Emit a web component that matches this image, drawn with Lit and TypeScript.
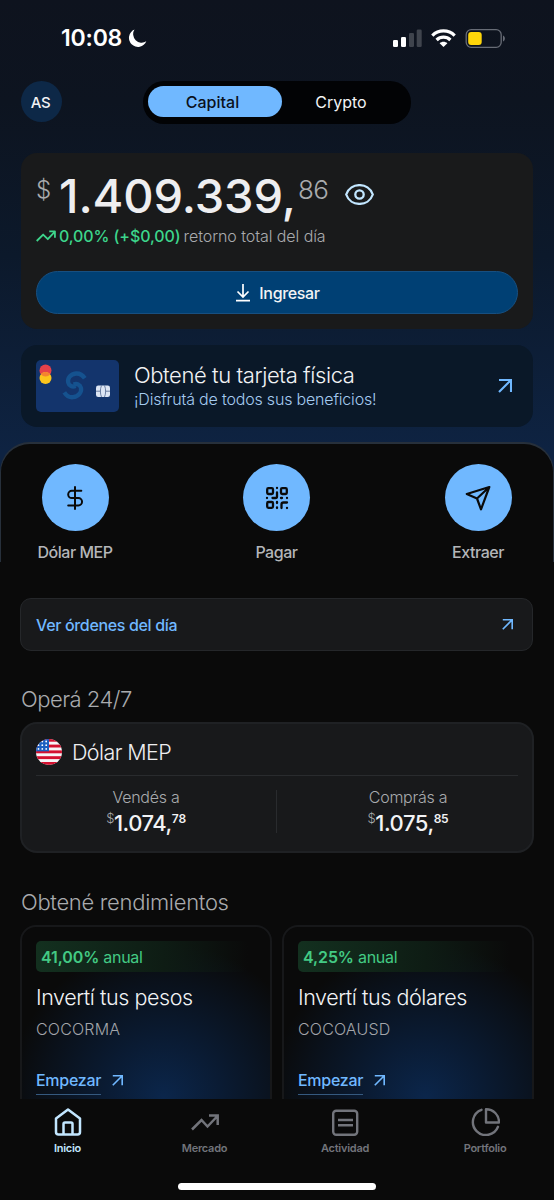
import { LitElement, html, css, svg } from "lit";
import { customElement } from "lit/decorators.js";

const arrow = (size: number, width: number) => html`<svg width=${size} height=${size} viewBox="0 0 14 14" fill="none" stroke="currentColor" stroke-width=${width}><path d="M1 1H13V13M13 1L1 13" /></svg>`;

const trend = (w: number, h: number, sw: number) => html`<svg width=${w} height=${h} viewBox="0 0 28 16" fill="none" stroke="currentColor" stroke-width=${sw} stroke-linejoin="round"><path d="M1 15L10 6L16.500 12.500L26.500 2M18.500 1.500H26.500V10.500" /></svg>`;

const dollarIcon = html`<svg width="24" height="24" viewBox="0 0 24 24" fill="none" stroke="#0a0a0a" stroke-width="2" stroke-linecap="round" stroke-linejoin="round"><path d="M12 1V23M18.300 4.800H8.800A3.600 3.600 0 0 0 8.800 12H15.300A3.600 3.600 0 0 1 15.300 19.500H5.200" /></svg>`;

const qrIcon = html`<svg width="24" height="24" viewBox="0 0 24 24" fill="none" stroke="#0a0a0a" stroke-width="2.300" stroke-linecap="round" stroke-linejoin="round"><rect x="2.200" y="2.200" width="5.800" height="5.800" rx="1.200" /><rect x="16" y="2.200" width="5.800" height="5.800" rx="1.200" /><rect x="2.200" y="16" width="5.800" height="5.800" rx="1.200" /><path d="M12 2V2.010M12 6.500V10.500Q12 12 10.500 12H7.500M2 12H2.010M16 12H17M22 12V12.010M12 16V17M12 21.500V22M16.500 22V18.500Q16.500 16.500 18.500 16.500H22M22 22V22.010" /></svg>`;

const sendIcon = html`<svg width="26" height="26" viewBox="0 0 26 26" fill="none" stroke="#0a0a0a" stroke-width="2.200" stroke-linejoin="round"><path d="M24.300 2L1.800 9L12 13.500L16 24.300ZM24.300 2L12 13.500" /></svg>`;

const flag = html`<svg width="26" height="26" viewBox="0 0 26 26"><defs><clipPath id="disc"><circle cx="13" cy="13" r="13" /></clipPath></defs><g clip-path="url(#disc)"><rect width="26" height="26" fill="#f6f5f8" />${[0, 1, 2, 3, 4].map((i) => svg`<rect x="0" y=${i * 5.8 - 0.2} width="26" height="2.900" fill="#d4102f" />`)}<rect width="13" height="12.300" fill="#1c5fc0" />${[2.5, 6.2, 9.9].map((y) => [2.5, 6.3, 10.2].map((x) => svg`<circle cx=${x} cy=${y} r="0.900" fill="#fff" />`))}</g></svg>`;

const cardArt = html`<svg width="83" height="52" viewBox="0 0 83 52"><rect width="83" height="52" rx="5" fill="#13346c" /><circle cx="9.500" cy="10.500" r="6" fill="#e5414a" /><circle cx="9.500" cy="18" r="6" fill="#fcc51c" /><path d="M4.800 14.250A6 6 0 0 1 14.200 14.250A6 6 0 0 1 4.800 14.250" fill="#f5832f" /><g fill="none" stroke="#15528f" stroke-width="4.300"><path d="M48.800 18.300C46.500 14.800 43.300 13.300 40 13.500C34.300 14 31.300 18.500 32.200 22.500C33 26 36.500 27.300 39.600 26" /><path d="M28.300 32.300C30.500 35.800 33.800 37.500 37 37.200C42.700 36.700 45.800 32 45 28C44.200 24.500 40.800 23.200 37.600 24.500" /></g><rect x="60" y="25.500" width="14" height="11.500" rx="2.200" fill="#dce5f4" /><path d="M60 31.200H64.800M69.200 31.200H74M65.500 25.500C64 29 64 33.500 65.500 37M68.500 25.500C70 29 70 33.500 68.500 37" fill="none" stroke="#52678f" stroke-width=".8" /></svg>`;

@customElement("status-bar")
class StatusBar extends LitElement {
  static styles = css`
    :host { display: flex; justify-content: space-between; align-items: center; height: 76px; padding: 0 48px 0 61px; box-sizing: border-box; }
    .time { display: flex; align-items: center; gap: 6px; font: 600 23px/28px Inter, sans-serif; letter-spacing: -0.2px; color: #fff; }
    .signals { display: flex; align-items: center; gap: 9px; }
    svg { display: block; }
  `;
  render() {
    return html`
      <div class="time">10:08<svg width="19" height="19" viewBox="0 0 19 19"><path d="M6.500 .6A9 9 0 1 0 18.300 12.300A8.500 8.500 0 0 1 6.500 .6Z" fill="#fff" /></svg></div>
      <div class="signals">
        <svg width="29" height="18" viewBox="0 0 29 18"><rect y="11" width="5" height="7" rx="1.300" fill="#fff" /><rect x="8" y="8" width="5" height="10" rx="1.300" fill="#fff" /><rect x="16" y="4" width="5" height="14" rx="1.300" fill="#3f444d" /><rect x="23.700" y="0.500" width="5" height="17.500" rx="1.300" fill="#3f444d" /></svg>
        <svg width="25" height="18" viewBox="0 0 25 18"><g fill="none" stroke="#fff" stroke-width="3.200"><path d="M1.300 6.600C7.600 .4 17.400 .4 23.700 6.600" /><path d="M5.600 11C9.500 7.200 15.500 7.200 19.400 11" /></g><path d="M12.500 18L8.600 14.200C10.800 12.200 14.200 12.200 16.400 14.200Z" fill="#fff" /></svg>
        <svg width="41" height="19" viewBox="0 0 41 19"><rect x="1.200" y=".7" width="35" height="17.600" rx="5" fill="none" stroke="#676c76" stroke-width="1.300" /><rect x="3.200" y="3" width="13.500" height="13" rx="3" fill="#ffd60a" /><path d="M38 6.500C40.500 7.500 40.500 11.500 38 12.500Z" fill="#676c76" /></svg>
      </div>
    `;
  }
}

@customElement("yield-card")
class YieldCard extends LitElement {
  static properties = { rate: {}, name: {}, ticker: {} };
  declare rate: string;
  declare name: string;
  declare ticker: string;
  static styles = css`
    :host { display: block; box-sizing: border-box; height: 200px; padding: 14px; border: 2px solid #17181a; border-radius: 16px; background: radial-gradient(circle 155px at 57% 171px, #0b264b 0%, #0a1b33 38%, #0a111b 75%, #0a0a0a 100%); font-family: Inter, sans-serif; }
    .badge { height: 31px; width: 212px; border-radius: 5px; background: linear-gradient(90deg, #13301f, #0e1c14 60%, transparent); font-size: 16px; line-height: 32px; color: #43ca84; padding-left: 5px; box-sizing: border-box; letter-spacing: -0.3px; }
    .badge b { font-weight: 600; letter-spacing: -0.1px; }
    .name { margin-top: 12px; font-weight: 300; font-size: 21.500px; line-height: 26px; letter-spacing: -0.430px; color: #f2f3f5; white-space: nowrap; }
    .ticker { margin-top: 9px; font-weight: 300; font-size: 16px; line-height: 20px; letter-spacing: 0.180px; color: #a3a5aa; }
    .start { display: flex; align-items: center; gap: 11px; margin-top: 29px; color: #70b8ff; }
    .start span { display: block; height: 27px; box-sizing: border-box; padding-top: 1px; border-bottom: 1px solid #35597f; font-weight: 500; font-size: 16px; line-height: 22px; letter-spacing: -0.280px; }
    .start svg { display: block; margin-top: -3px; }
  `;
  render() {
    return html`
      <div class="badge"><b>${this.rate}</b> anual</div>
      <div class="name">${this.name}</div>
      <div class="ticker">${this.ticker}</div>
      <div class="start"><span>Empezar</span>${arrow(11, 2.1)}</div>
    `;
  }
}

@customElement("app-root")
class AppRoot extends LitElement {
  static styles = css`
    :host { display: block; width: 554px; height: 1200px; overflow: hidden; background: #0a0a0a; color: #f2f3f5; font-family: Inter, sans-serif; font-size: 16px; }
    * { box-sizing: border-box; }
    svg { display: block; flex: none; }
    .screen { height: 1099px; overflow: hidden; }
    .top { height: 512px; background: linear-gradient(180deg, #0e131e 0%, #0d1420 20%, #0c192b 50%, #0e2342 88%); }
    .header { display: grid; grid-template-columns: 122px 268px; height: 41px; margin-top: 5px; padding-left: 21px; }
    .avatar { width: 41px; height: 41px; border-radius: 50%; background: #0d2847; font-weight: 500; font-size: 15px; line-height: 43px; letter-spacing: -0.4px; text-align: center; padding-right: 2px; }
    .toggle { display: grid; grid-template-columns: 134px 118px; padding: 5px; border-radius: 21px; background: #020305; line-height: 33px; text-align: center; }
    .toggle .on { height: 31px; border-radius: 16px; background: #70b8ff; color: #0a111c; font-weight: 500; padding-right: 5px; }
    .balance { width: 512px; height: 176px; margin: 31px 0 0 21px; padding: 16px 15px; border-radius: 16px; background: #191a1b; }
    .amount { display: flex; height: 54px; }
    .cur { width: 23px; font-weight: 300; font-size: 24px; line-height: 42px; color: #a9abae; }
    .whole { width: 239px; font-weight: 500; font-size: 47px; line-height: 54px; letter-spacing: -0.100px; color: #eeeef0; white-space: nowrap; }
    .cents { width: 47px; font-weight: 300; font-size: 26px; line-height: 42px; letter-spacing: -0.700px; color: #a9abae; }
    .eye { margin-top: 15px; }
    .gain { display: flex; align-items: center; height: 26px; color: #3dd68c; white-space: nowrap; }
    .gain b { margin-left: 3px; font-weight: 500; letter-spacing: -0.100px; }
    .gain span { margin-left: 3px; font-weight: 300; letter-spacing: -0.070px; color: #a9abae; }
    .deposit { display: flex; align-items: center; justify-content: center; gap: 9px; width: 482px; height: 43px; margin-top: 22px; padding: 1px 0 0 2px; border: 1px solid #174f80; border-radius: 22px; background: #004074; font-weight: 500; letter-spacing: -0.350px; }
    .promo { display: flex; align-items: center; width: 512px; height: 82px; margin: 16px 0 0 21px; padding: 0 21px 0 15px; border-radius: 16px; background: #0a1828; color: #70b8ff; }
    .promo div { flex: 1; padding-left: 15px; white-space: nowrap; }
    .promo h2 { margin: 0; font-weight: 300; font-size: 22px; line-height: 26px; letter-spacing: -0.410px; color: #f2f3f5; }
    .promo p { margin: 0; font-weight: 300; line-height: 22px; letter-spacing: -0.180px; color: #a5cbf0; }
    .actions { display: flex; justify-content: space-between; height: 120px; margin-top: -70px; padding: 20px 32px 0 31px; border: solid #27303b; border-width: 2px 1px 0; border-radius: 30px 30px 0 0; background: #0a0a0a; }
    .action { width: 86px; display: flex; flex-direction: column; align-items: center; gap: 10px; font-weight: 500; line-height: 22px; letter-spacing: -0.450px; color: #b4b6b9; white-space: nowrap; }
    .round { display: flex; flex: none; align-items: center; justify-content: center; width: 67px; height: 67px; border-radius: 50%; background: #70b8ff; }
    .orders { display: flex; align-items: center; justify-content: space-between; width: 513px; height: 53px; margin: 36px 0 0 20px; padding: 0 19px 0 15px; border: 1px solid #25272a; border-radius: 11px; background: #18191b; color: #70b8ff; font-weight: 500; letter-spacing: -0.340px; }
    .title { margin: 0 0 0 21px; font-weight: 300; font-size: 22px; line-height: 28px; letter-spacing: -0.300px; color: #a9abae; }
    .trade { margin-top: 34px; letter-spacing: -0.500px; }
    .mep { width: 514px; height: 131px; margin: 9px 0 0 20px; padding: 0 14px; border: 2px solid #1f2124; border-radius: 17px; background: #18191b; }
    .mep header { display: flex; align-items: center; gap: 10px; height: 52px; padding-top: 4px; border-bottom: 1px solid #292b2e; font-weight: 300; font-size: 21.500px; letter-spacing: -0.600px; color: #eeeef0; }
    .quotes { display: grid; grid-template-columns: 240px 1fr; grid-template-rows: 43px; height: 43px; margin-top: 14px; }
    .quote { text-align: center; padding-right: 20px; }
    .quote + .quote { border-left: 1px solid #292b2e; padding: 0 0 0 21px; }
    .side { font-weight: 300; line-height: 14px; letter-spacing: -0.280px; color: #a9abae; }
    .price { display: flex; justify-content: center; margin-top: 4px; font-weight: 500; font-size: 22px; line-height: 30px; letter-spacing: -0.450px; color: #f2f3f5; }
    .price i { font-style: normal; font-weight: 300; font-size: 13px; line-height: 20px; color: #a9abae; }
    .price em { font-style: normal; font-weight: 600; font-size: 12px; line-height: 21px; letter-spacing: -0.200px; }
    .earn { margin-top: 35px; }
    .yields { display: grid; grid-template-columns: 252px 252px; gap: 10px; margin: 9px 0 0 20px; }
    .tabs { display: grid; grid-template-columns: 137px 140.500px 140px 101px; height: 84px; padding: 9px 0 0 17px; }
    .tab { display: flex; flex-direction: column; align-items: center; gap: 5px; width: 101px; color: #72747b; font-weight: 600; font-size: 11px; line-height: 14px; letter-spacing: -0.250px; }
    .tab.on { color: #c2e6ff; }
    .home { width: 198px; height: 7px; margin: 0 auto; border-radius: 4px; background: #fff; }
  `;

  action(icon: unknown, label: string) {
    return html`<div class="action"><div class="round">${icon}</div>${label}</div>`;
  }

  quote(side: string, whole: string, cents: string) {
    return html`<div class="quote"><div class="side">${side}</div><div class="price"><i>$</i>${whole}<em>${cents}</em></div></div>`;
  }

  render() {
    return html`
      <div class="screen">
        <div class="top">
          <status-bar></status-bar>
          <div class="header">
            <div class="avatar">AS</div>
            <div class="toggle"><div class="on">Capital</div><div>Crypto</div></div>
          </div>
          <div class="balance">
            <div class="amount">
              <div class="cur">$</div><div class="whole">1.409.339,</div><div class="cents">86</div>
              <svg class="eye" width="29" height="21" viewBox="0 0 29 21" fill="none" stroke="#c2e6ff" stroke-width="2.300"><path d="M1.200 10.500C5.500-2 23.500-2 27.800 10.500C23.500 23 5.500 23 1.200 10.500Z" /><circle cx="14.500" cy="10.500" r="4.200" /></svg>
            </div>
            <div class="gain">${trend(20, 12, 2.5)}<b>0,00% (+$0,00)</b><span>retorno total del día</span></div>
            <div class="deposit"><svg width="14" height="18" viewBox="0 0 14 18" fill="none" stroke="#fff" stroke-width="1.700"><path d="M7 0V12.500M1.500 7.500L7 13L12.500 7.500M0 16.700H14" /></svg>Ingresar</div>
          </div>
          <div class="promo">${cardArt}<div><h2>Obtené tu tarjeta física</h2><p>¡Disfrutá de todos sus beneficios!</p></div>${arrow(14, 2.1)}</div>
        </div>
        <div class="actions">
          ${this.action(dollarIcon, "Dólar MEP")}${this.action(qrIcon, "Pagar")}${this.action(sendIcon, "Extraer")}
        </div>
        <div class="orders">Ver órdenes del día${arrow(11, 2.1)}</div>
        <h3 class="title trade">Operá 24/7</h3>
        <div class="mep">
          <header>${flag}Dólar MEP</header>
          <div class="quotes">${this.quote("Vendés a", "1.074,", "78")}${this.quote("Comprás a", "1.075,", "85")}</div>
        </div>
        <h3 class="title earn">Obtené rendimientos</h3>
        <div class="yields">
          <yield-card rate="41,00%" name="Invertí tus pesos" ticker="COCORMA"></yield-card>
          <yield-card rate="4,25%" name="Invertí tus dólares" ticker="COCOAUSD"></yield-card>
        </div>
      </div>
      <div class="tabs">
        <div class="tab on"><svg width="28" height="28" viewBox="0 0 28 28" fill="none" stroke="currentColor" stroke-width="2.500" stroke-linejoin="round"><path d="M2 24V10.500L14 1.500L26 10.500V24Q26 26.500 23.500 26.500H4.500Q2 26.500 2 24ZM9.500 26.500V16Q9.500 14.500 11 14.500H17Q18.500 14.500 18.500 16V26.500" /></svg>Inicio</div>
        <div class="tab"><svg width="28" height="28" viewBox="0 0 28 28" fill="none" stroke="currentColor" stroke-width="2.500"><path d="M1 21.500L10.500 12L16.500 18.500L26.500 8M18 7.500H26.700V17" /></svg>Mercado</div>
        <div class="tab"><svg width="28" height="28" viewBox="0 0 28 28" fill="none" stroke="currentColor" stroke-width="2.400"><rect x="2.200" y="2.700" width="24" height="24" rx="3" /><path d="M7 12H22M7 17.200H22" /></svg>Actividad</div>
        <div class="tab"><svg width="30" height="28" viewBox="0 0 30 28" fill="none" stroke="currentColor" stroke-width="2.400" stroke-linejoin="round" stroke-linecap="round"><path d="M11.500 1.800A13 13 0 1 0 28 18.800M16 1.200V14.500H29C29 7 23.500 1.200 16 1.200Z" /></svg>Portfolio</div>
      </div>
      <div class="home"></div>
    `;
  }
}
